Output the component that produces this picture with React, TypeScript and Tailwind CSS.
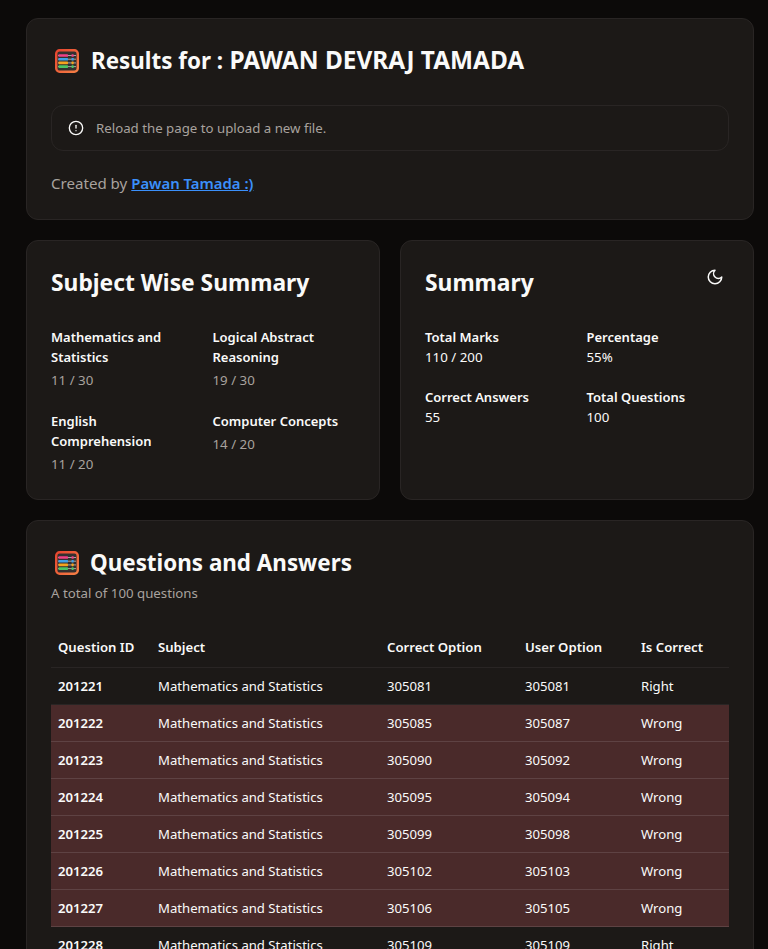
import React from "react";

function Abacus() {
  const rows = [
    { y: 6.5, c: "#ee3f86" },
    { y: 10.2, c: "#3f9fe6" },
    { y: 13.9, c: "#f5a31f" },
    { y: 17.6, c: "#4cc463" },
  ];
  return (
    <svg width="24" height="24" viewBox="0 0 24 24" className="shrink-0">
      <defs>
        <linearGradient id="abacus-frame" x1="0" y1="0" x2="1" y2="1">
          <stop offset="0" stopColor="#e8452f" />
          <stop offset="1" stopColor="#f57f45" />
        </linearGradient>
      </defs>
      <rect x="1.2" y="1.2" width="21.6" height="21.6" rx="3.5" fill="#33302f" stroke="url(#abacus-frame)" strokeWidth="2.4" />
      {rows.map((r) => (
        <g key={r.y}>
          <rect x="3" y={r.y - 0.5} width="18" height="1" fill="#a8a29e" />
          <rect x="3.5" y={r.y - 1.3} width="9.5" height="2.6" rx="0.6" fill={r.c} />
          <rect x="16.5" y={r.y - 1.3} width="2.2" height="2.6" rx="0.6" fill={r.c} />
        </g>
      ))}
    </svg>
  );
}

function Stat({ label, value }: { label: string; value: string }) {
  return (
    <div>
      <div className="text-[13px] font-semibold leading-5 text-[#fafaf9]">{label}</div>
      <div className="text-[13.3px] leading-5 mt-[3px] text-[#a8a29e]">{value}</div>
    </div>
  );
}

function Plain({ label, value }: { label: string; value: string }) {
  return (
    <div>
      <div className="text-[13px] font-semibold leading-5">{label}</div>
      <div className="text-[13.3px] leading-5">{value}</div>
    </div>
  );
}

const rows: [string, string, string, string, boolean][] = [
  ["201221", "Mathematics and Statistics", "305081", "305081", true],
  ["201222", "Mathematics and Statistics", "305085", "305087", false],
  ["201223", "Mathematics and Statistics", "305090", "305092", false],
  ["201224", "Mathematics and Statistics", "305095", "305094", false],
  ["201225", "Mathematics and Statistics", "305099", "305098", false],
  ["201226", "Mathematics and Statistics", "305102", "305103", false],
  ["201227", "Mathematics and Statistics", "305106", "305105", false],
  ["201228", "Mathematics and Statistics", "305109", "305109", true],
];

export default function App() {
  return (
    <div className="h-[949px] overflow-hidden bg-[#0c0a09] pl-[26px] pr-[14px] pt-[18px] text-[#fafaf9] font-['Noto_Sans','Open_Sans',sans-serif] flex flex-col gap-5">
      <div className="shrink-0 rounded-xl border border-[#292524] bg-[#1c1917] p-6">
        <div className="flex items-center h-[36px] text-[24.4px] font-bold">
          <span className="ml-1 mr-3 flex"><Abacus /></span>
          <h1 className="pb-[2px]"><span className="text-[22.4px]">Results for :</span> PAWAN DEVRAJ TAMADA</h1>
        </div>
        <div className="mt-[26px] flex items-center gap-3 rounded-xl border border-[#292524] px-4 h-[46px] text-[13.25px] text-[#a8a29e]">
          <svg width="16" height="16" viewBox="0 0 24 24" fill="none" stroke="#fafaf9" strokeWidth="2" strokeLinecap="round" strokeLinejoin="round">
            <circle cx="12" cy="12" r="10" />
            <line x1="12" y1="8" x2="12" y2="12" />
            <line x1="12" y1="16" x2="12.01" y2="16" />
          </svg>
          <span className="pt-[1px]">Reload the page to upload a new file.</span>
        </div>
        <p className="mt-[20px] leading-6 text-[15.1px] text-[#a8a29e]">
          Created by <a className="font-semibold text-[14.9px] text-[#3b90fb] underline">Pawan Tamada :)</a>
        </p>
      </div>

      <div className="shrink-0 grid grid-cols-2 gap-5 h-[260px]">
        <div className="rounded-xl border border-[#292524] bg-[#1c1917] p-6">
          <h2 className="text-[22.8px] font-bold leading-8 mt-[2px]">Subject Wise Summary</h2>
          <div className="mt-[28px] grid grid-cols-2 gap-x-[19px] gap-y-[21px]">
            <Stat label="Mathematics and Statistics" value="11 / 30" />
            <Stat label="Logical Abstract Reasoning" value="19 / 30" />
            <Stat label="English Comprehension" value="11 / 20" />
            <Stat label="Computer Concepts" value="14 / 20" />
          </div>
        </div>
        <div className="relative rounded-xl border border-[#292524] bg-[#1c1917] p-6">
          <h2 className="text-[22.8px] font-bold leading-8 mt-[2px]">Summary</h2>
          <svg className="absolute right-[29px] top-[27px]" width="18" height="18" viewBox="0 0 24 24" fill="none" stroke="#fafaf9" strokeWidth="2" strokeLinecap="round" strokeLinejoin="round">
            <path d="M12 3a6 6 0 0 0 9 9 9 9 0 1 1-9-9Z" />
          </svg>
          <div className="mt-[28px] grid grid-cols-2 gap-x-[19px] gap-y-[20px]">
            <Plain label="Total Marks" value="110 / 200" />
            <Plain label="Percentage" value="55%" />
            <Plain label="Correct Answers" value="55" />
            <Plain label="Total Questions" value="100" />
          </div>
        </div>
      </div>

      <div className="rounded-xl border border-[#292524] bg-[#1c1917] p-6 shrink-0">
        <div className="flex items-center h-[36px] text-[22.4px] font-bold">
          <span className="ml-1 mr-[11px] flex"><Abacus /></span>
          <h2>Questions and Answers</h2>
        </div>
        <p className="mt-[2px] text-[13.25px] leading-5 text-[#a8a29e]">A total of 100 questions</p>
        <table className="mt-[24px] w-full table-fixed border-collapse text-[13.15px]">
          <thead>
            <tr className="border-b border-[#292524] h-[40px]">
              <th className="w-[100px] pl-[7px] pr-2 pt-[2px] text-left font-semibold">Question ID</th>
              <th className="w-[228px] pl-[7px] pr-2 pt-[2px] text-left font-semibold">Subject</th>
              <th className="w-[138px] px-2 pt-[2px] text-left font-semibold">Correct Option</th>
              <th className="w-[116px] px-2 pt-[2px] text-left font-semibold">User Option</th>
              <th className="px-2 pt-[2px] text-left font-semibold">Is Correct</th>
            </tr>
          </thead>
          <tbody>
            {rows.map((r) => (
              <tr key={r[0]} className={"h-[37px] border-b " + (r[4] ? "border-[#292524]" : "bg-[#4a2a2a] border-[#5e4243]")}>
                <td className="pl-[7px] pr-2 pt-[2px] font-semibold">{r[0]}</td>
                <td className="pl-[7px] pr-2 pt-[2px]">{r[1]}</td>
                <td className="px-2 pt-[2px]">{r[2]}</td>
                <td className="px-2 pt-[2px]">{r[3]}</td>
                <td className="px-2 pt-[2px]">{r[4] ? "Right" : "Wrong"}</td>
              </tr>
            ))}
          </tbody>
        </table>
      </div>
    </div>
  );
}
